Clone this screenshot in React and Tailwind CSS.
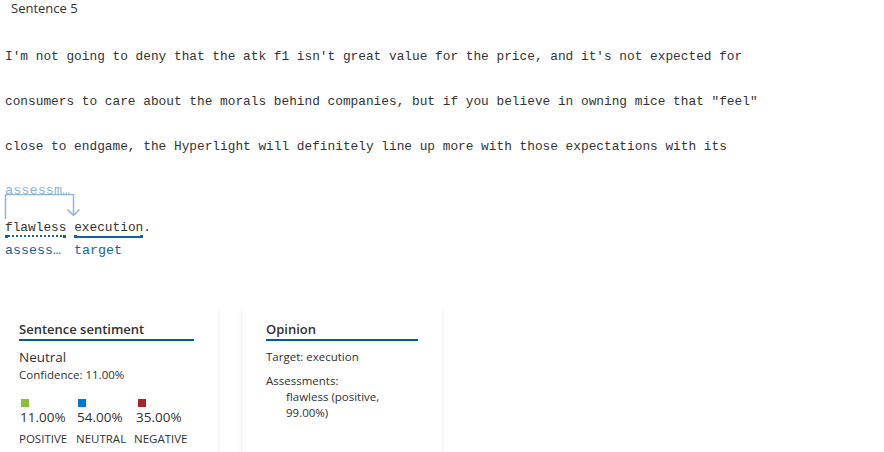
import React from "react";

const mono = { fontFamily: '"Liberation Mono", "DejaVu Sans Mono", monospace' };

export default function App() {
  return (
    <div className="w-[884px] h-[452px] overflow-hidden bg-white text-[#323130] font-['Open_Sans',sans-serif]">
      <div className="pl-[11px] h-[16px] leading-[16px] text-[13px]">Sentence 5</div>

      <div className="pt-[18px] pl-[5px] text-[12.8px] text-[#333]" style={mono}>
        <div className="h-[45px] leading-[45px] whitespace-pre">I'm not going to deny that the atk f1 isn't great value for the price, and it's not expected for</div>
        <div className="h-[45px] leading-[45px] whitespace-pre">consumers to care about the morals behind companies, but if you believe in owning mice that "feel"</div>
        <div className="h-[45px] leading-[45px] whitespace-pre">close to endgame, the Hyperlight will definitely line up more with those expectations with its</div>
      </div>

      <div className="relative pt-[14px] pl-[5px] text-[#333]" style={mono}>
        <div className="h-[16px] leading-[16px] text-[13.6px] text-[#8db4da] whitespace-pre">assessm…</div>
        <svg className="absolute left-0 top-[25px]" width="90" height="28" viewBox="0 0 90 28" fill="none">
          <path d="M5.5 0.5 H73.5 V21.5" stroke="#8db4da" strokeWidth="1.5" />
          <path d="M5.5 0.5 V25" stroke="#8db4da" strokeWidth="1.5" />
          <path d="M67.5 15.5 L73.5 21.5 L79.5 15.5" stroke="#8db4da" strokeWidth="1.5" />
        </svg>
        <div className="mt-[21px] h-[16px] leading-[16px] text-[12.8px] whitespace-pre">
          <span className="relative inline-block">
            flawless
            <span className="absolute left-0 right-[1px] top-[15px] border-b-2 border-dotted border-[#1a5e9e]" />
            <span className="absolute left-0 top-[15px] w-[3px] h-[3px] bg-[#1a5e9e]" />
            <span className="absolute right-0 top-[15px] w-[3px] h-[3px] bg-[#1a5e9e]" />
          </span>
          {" "}
          <span className="relative inline-block">
            execution
            <span className="absolute left-0 right-0 top-[16px] h-[2px] bg-[#1a5e9e]" />
            <span className="absolute left-0 top-[15px] w-[3px] h-[3px] bg-[#1a5e9e]" />
            <span className="absolute right-0 top-[15px] w-[3px] h-[3px] bg-[#1a5e9e]" />
          </span>
          .
        </div>
        <div className="mt-[7px] h-[16px] leading-[16px] text-[13.3px] text-[#1462a8] flex">
          <span className="w-[69px]">assess…</span>
          <span>target</span>
        </div>
      </div>

      <div className="mt-[48px] flex gap-[24px]">
        <div className="-ml-[5px] w-[223px] h-[160px] bg-white px-[24px] pt-[13px] shadow-[0_1.6px_3.6px_rgba(0,0,0,0.10),0_0.3px_0.9px_rgba(0,0,0,0.08)]">
          <div className="leading-[19px] text-[13px] font-semibold border-b-2 border-[#005a9e]">Sentence sentiment</div>
          <div className="mt-[6px] leading-[20px] text-[13.5px]">Neutral</div>
          <div className="leading-[16px] text-[11.5px]">Confidence: 11.00%</div>
          <div className="mt-[16px] flex">
            <div className="w-[57px]">
              <div className="ml-[2px] w-[8px] h-[8px] bg-[#8cbd3a]" />
              <div className="pl-[1px] leading-[20px] text-[13.5px]">11.00%</div>
              <div className="mt-[4px] leading-[16px] text-[11.5px]">POSITIVE</div>
            </div>
            <div className="w-[58px]">
              <div className="ml-[2px] w-[8px] h-[8px] bg-[#0078d4]" />
              <div className="pl-[1px] leading-[20px] text-[13.5px]">54.00%</div>
              <div className="mt-[4px] leading-[16px] text-[11.5px]">NEUTRAL</div>
            </div>
            <div>
              <div className="ml-[4px] w-[8px] h-[8px] bg-[#a4262c]" />
              <div className="pl-[2px] leading-[20px] text-[13.5px]">35.00%</div>
              <div className="mt-[4px] leading-[16px] text-[11.5px]">NEGATIVE</div>
            </div>
          </div>
        </div>

        <div className="w-[200px] h-[160px] bg-white px-[24px] pt-[13px] shadow-[0_1.6px_3.6px_rgba(0,0,0,0.10),0_0.3px_0.9px_rgba(0,0,0,0.08)]">
          <div className="leading-[19px] text-[13px] font-semibold border-b-2 border-[#005a9e]">Opinion</div>
          <div className="mt-[8px] leading-[16px] text-[11.5px]">Target: execution</div>
          <div className="mt-[8px] leading-[16px] text-[11.5px]">Assessments:</div>
          <div className="pl-[20px] leading-[16px] text-[11.5px]">
            <div>flawless (positive,</div>
            <div>99.00%)</div>
          </div>
        </div>
      </div>
    </div>
  );
}
